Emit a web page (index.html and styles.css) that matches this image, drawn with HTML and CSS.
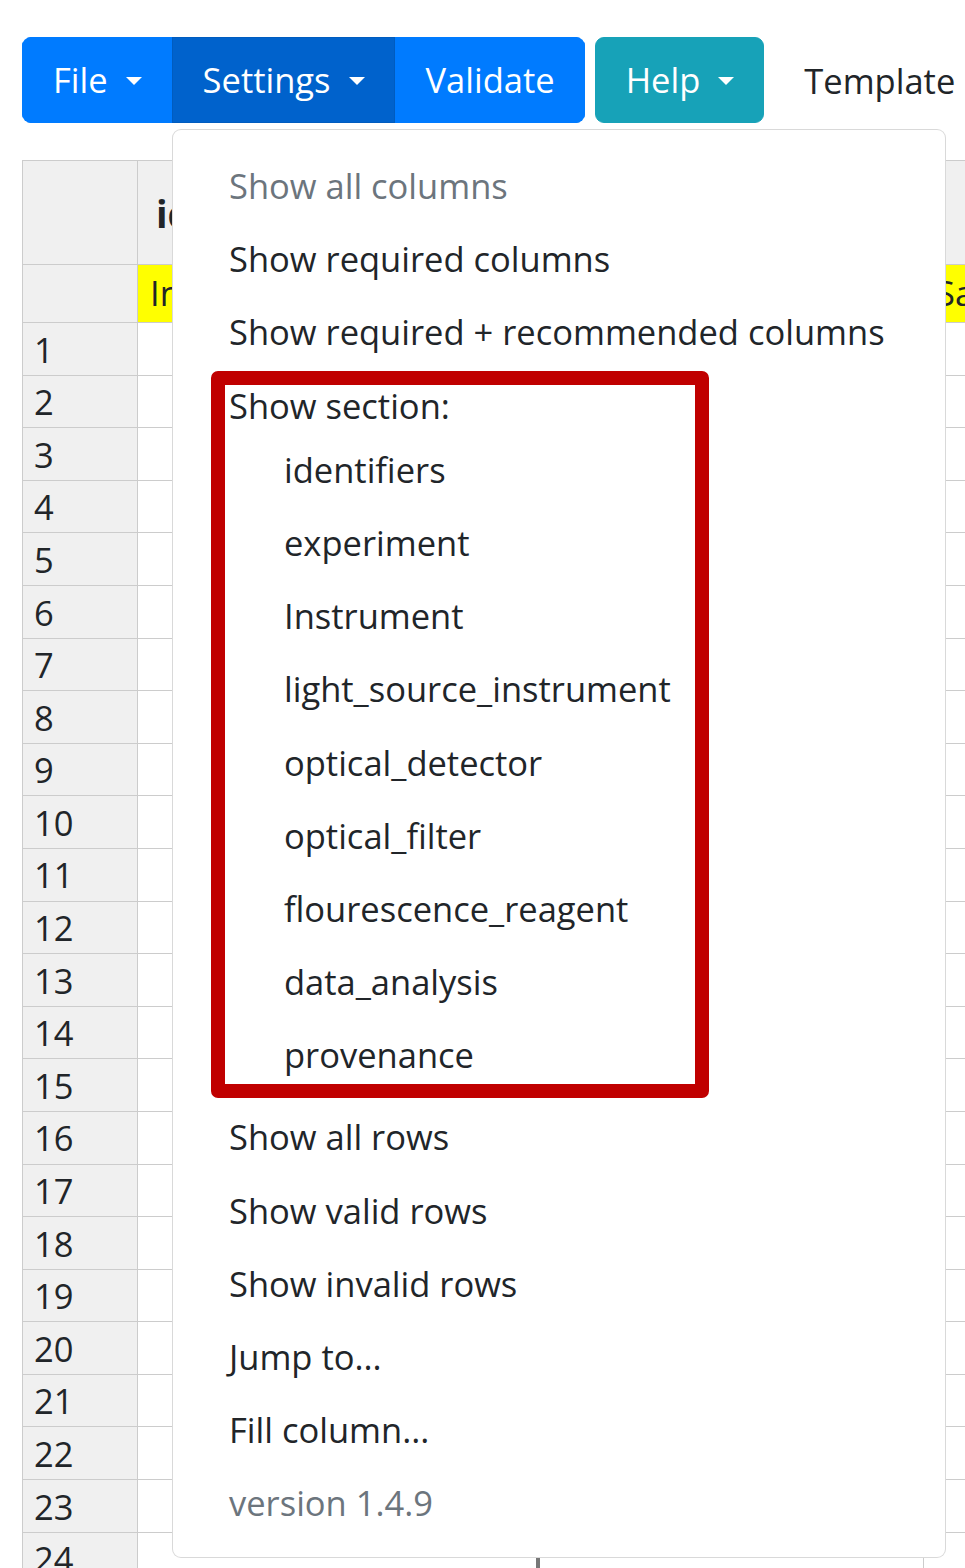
FILE: index.html
```html
<!DOCTYPE html>
<html>
<head>
<meta charset="utf-8">
<link rel="stylesheet" href="styles.css">
</head>
<body>
<div class="page">
  <div class="toolbar">
    <div class="btn-group">
      <button class="btn btn-primary dropdown-toggle">File</button>
      <button class="btn btn-primary active dropdown-toggle">Settings</button>
      <button class="btn btn-primary">Validate</button>
    </div>
    <button class="btn btn-info dropdown-toggle">Help</button>
    <span class="template">Template</span>
  </div>

  <div class="grid-wrap">
    <table class="grid">
      <colgroup>
        <col class="c-rh"><col class="c-a"><col class="c-b"><col class="c-c">
      </colgroup>
      <thead>
        <tr class="hdr1"><th></th><th class="sec">identifiers</th><th></th><th></th></tr>
        <tr class="hdr2"><th></th><th class="req">Investigation ID</th><th class="req">Instrument ID</th><th class="req">Sample ID</th></tr>
      </thead>
      <tbody id="rows"></tbody>
    </table>
  </div>

  <div class="dropdown-menu">
    <div class="dropdown-item disabled">Show all columns</div>
    <div class="dropdown-item">Show required columns</div>
    <div class="dropdown-item">Show required + recommended columns</div>
    <div class="dropdown-item section-head">Show section:</div>
    <div class="sub-list">
      <div class="dropdown-item sub">identifiers</div>
      <div class="dropdown-item sub">experiment</div>
      <div class="dropdown-item sub">Instrument</div>
      <div class="dropdown-item sub">light_source_instrument</div>
      <div class="dropdown-item sub">optical_detector</div>
      <div class="dropdown-item sub">optical_filter</div>
      <div class="dropdown-item sub">flourescence_reagent</div>
      <div class="dropdown-item sub">data_analysis</div>
      <div class="dropdown-item sub">provenance</div>
    </div>
    <div class="dropdown-item">Show all rows</div>
    <div class="dropdown-item">Show valid rows</div>
    <div class="dropdown-item">Show invalid rows</div>
    <div class="dropdown-item">Jump to...</div>
    <div class="dropdown-item">Fill column...</div>
    <div class="dropdown-item disabled">version 1.4.9</div>
  </div>

  <div class="highlight-box"></div>
</div>
<script>
  var tb = document.getElementById('rows');
  var html = '';
  for (var i = 1; i <= 24; i++) {
    html += '<tr><th>' + i + '</th><td></td><td class="cur"></td><td></td></tr>';
  }
  tb.innerHTML = html;
</script>
</body>
</html>
```

FILE: styles.css
```css
html, body {
  margin: 0;
  padding: 0;
  overflow: hidden;
  background: #fff;
}
body {
  font-family: "Open Sans", "Noto Sans", "Liberation Sans", sans-serif;
  font-size: 34.5px;
  color: #212529;
}
.page {
  position: relative;
  width: 965px;
  height: 1568px;
  overflow: hidden;
  padding: 37px 0 0 22px;
  box-sizing: border-box;
}
.toolbar {
  display: flex;
  align-items: center;
  height: 86px;
}
.btn-group {
  display: flex;
  border-radius: 9px;
  overflow: hidden;
}
.btn {
  font-family: inherit;
  font-size: 34.5px;
  line-height: 54px;
  height: 86px;
  padding: 0 29px 0 30px;
  border: 1px solid transparent;
  color: #fff;
  margin: 0;
  white-space: nowrap;
  display: flex;
  align-items: center;
  cursor: pointer;
}
.btn-primary {
  background: #007bff;
  border-color: #007bff;
}
.btn-primary.active {
  background: #0062cc;
  border-color: #005cbf;
}
.btn-info {
  background: #17a2b8;
  border-color: #17a2b8;
  border-radius: 9px;
  margin-left: 10px;
}
.dropdown-toggle::after {
  content: "";
  display: block;
  margin-left: 18px;
  margin-top: 2px;
  border-top: 8px solid #fff;
  border-left: 8px solid transparent;
  border-right: 8px solid transparent;
}
.template {
  margin-left: 40px;
  color: #212529;
  white-space: nowrap;
}

.grid-wrap {
  margin-top: 37px;
  width: 1100px;
}
.grid {
  border-collapse: collapse;
  table-layout: fixed;
  width: 1102px;
}
.c-rh { width: 115px; }
.c-a { width: 400px; }
.c-b { width: 386px; }
.c-c { width: 200px; }
.grid th, .grid td {
  border: 1px solid #ccc;
  padding: 0 12px;
  text-align: left;
  font-weight: normal;
  white-space: nowrap;
  overflow: hidden;
  line-height: 1;
  vertical-align: middle;
}
.grid thead th {
  background: #f0f0f0;
}
.hdr1 {
  height: 104px;
}
.hdr1 th.sec {
  font-weight: bold;
  padding-left: 18px;
  font-size: 38px;
}
.hdr2 {
  height: 58px;
}
.hdr2 th.req {
  background: #ffff00;
}
.grid tbody tr {
  height: 52.6px;
}
.grid tbody th {
  background: #f0f0f0;
  padding-left: 11px;
  padding-top: 2px;
}
.grid tbody td.cur {
  border-left: 4px solid #777;
}

.dropdown-menu {
  position: absolute;
  left: 172px;
  top: 129px;
  width: 774px;
  box-sizing: border-box;
  background: #fff;
  border: 1px solid rgba(0, 0, 0, 0.15);
  border-radius: 9px;
  padding: 19px 0 18px;
}
.dropdown-item {
  padding: 9.1px 56px;
  line-height: 55px;
  white-space: nowrap;
  color: #212529;
}
.dropdown-item.disabled {
  color: #6c757d;
}
.dropdown-item.section-head {
  padding-bottom: 0;
}
.sub-list {
  margin-bottom: 9px;
}
.dropdown-item.sub {
  padding-left: 111px;
}

.highlight-box {
  position: absolute;
  left: 211px;
  top: 371px;
  width: 498px;
  height: 727px;
  box-sizing: border-box;
  border: 14px solid #c00000;
  border-radius: 7px;
  pointer-events: none;
}
```
